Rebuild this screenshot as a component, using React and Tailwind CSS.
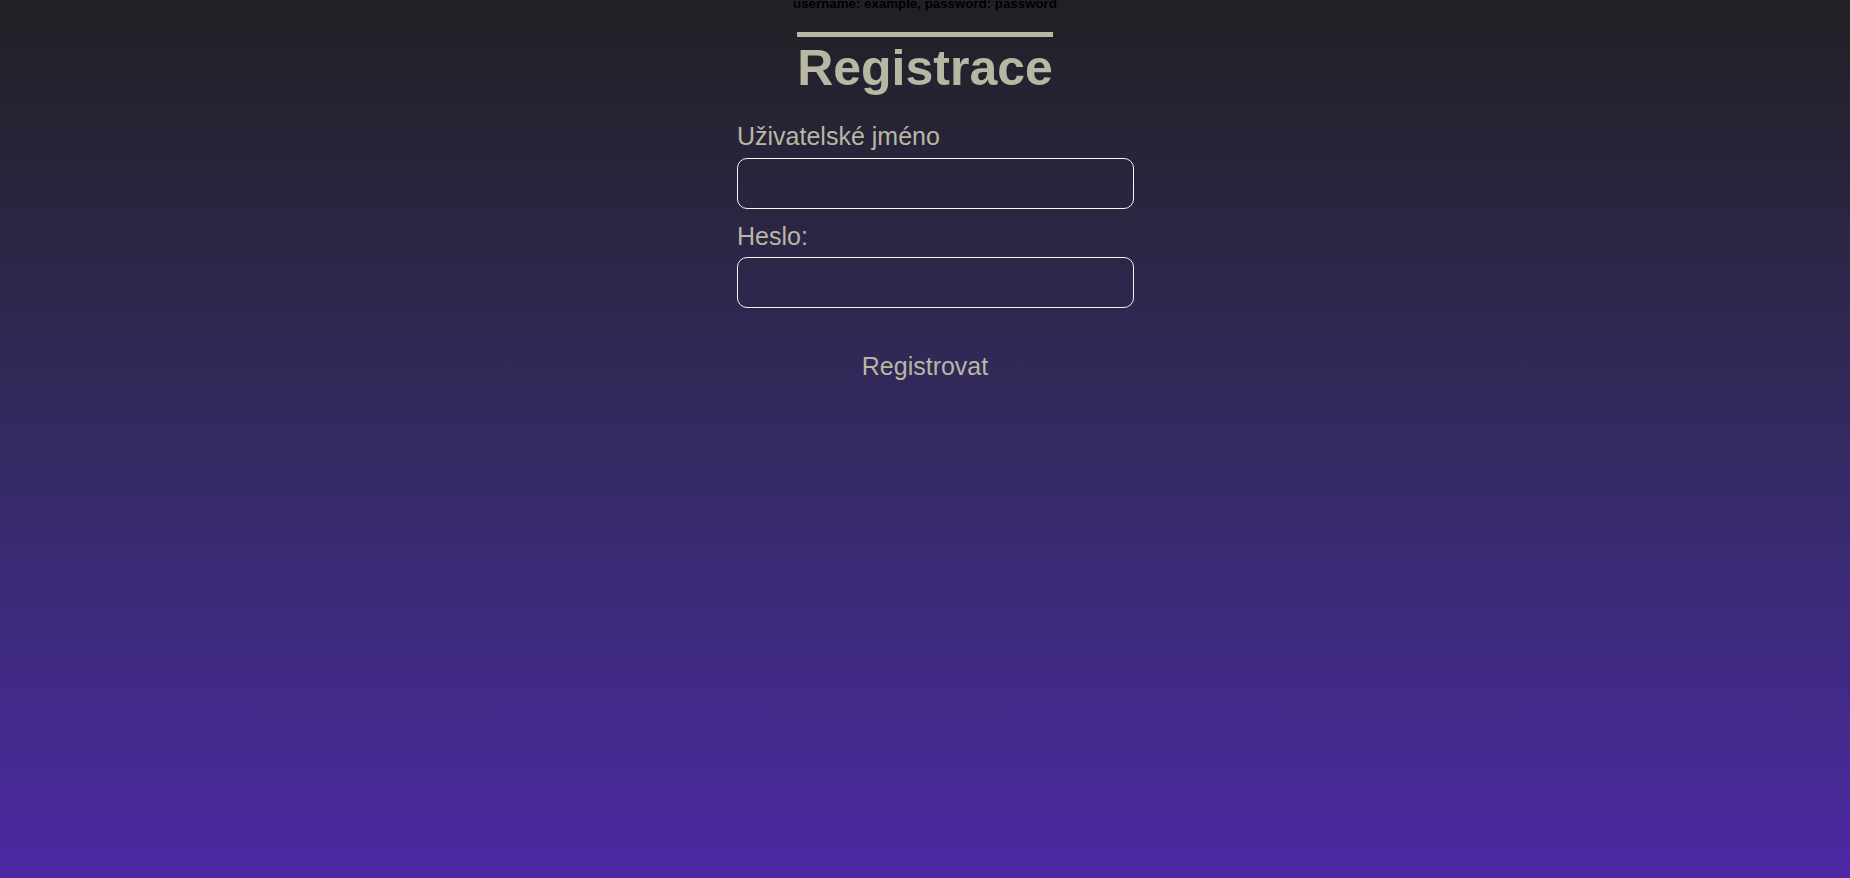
export default function App() {
  return (
    <div className="min-h-screen w-full bg-linear-to-b from-[#212024] to-[#4c28a4] font-['Liberation_Sans',Arial,sans-serif] leading-[normal] flex flex-col items-center">
      <p className="-mt-[4px] text-[13.3px] leading-[normal] font-bold text-black">username: example, password: password</p>
      <h1 className="mt-[21px] border-t-[5px] border-[#b7b7a4] pt-[2px] text-[50px] leading-[normal] font-bold text-[#b7b7a4]">
        Registrace
      </h1>
      <form className="w-[376px] mt-[25px] flex flex-col text-[#b7b7a4]">
        <label className="text-[25px] leading-[normal]">Uživatelské jméno</label>
        <input
          type="text"
          className="mt-[7px] w-[397px] h-[51px] rounded-[10px] border border-[#f4f4f4] bg-transparent px-[10px] text-[20px] text-[#b7b7a4] outline-none"
        />
        <label className="mt-[13px] text-[25px] leading-[normal]">Heslo:</label>
        <input
          type="password"
          className="mt-[6px] w-[397px] h-[51px] rounded-[10px] border border-[#f4f4f4] bg-transparent px-[10px] text-[20px] text-[#b7b7a4] outline-none"
        />
        <button type="button" className="mt-[44px] self-center text-[25px] leading-[normal] text-[#b7b7a4] bg-transparent">
          Registrovat
        </button>
      </form>
    </div>
  );
}
